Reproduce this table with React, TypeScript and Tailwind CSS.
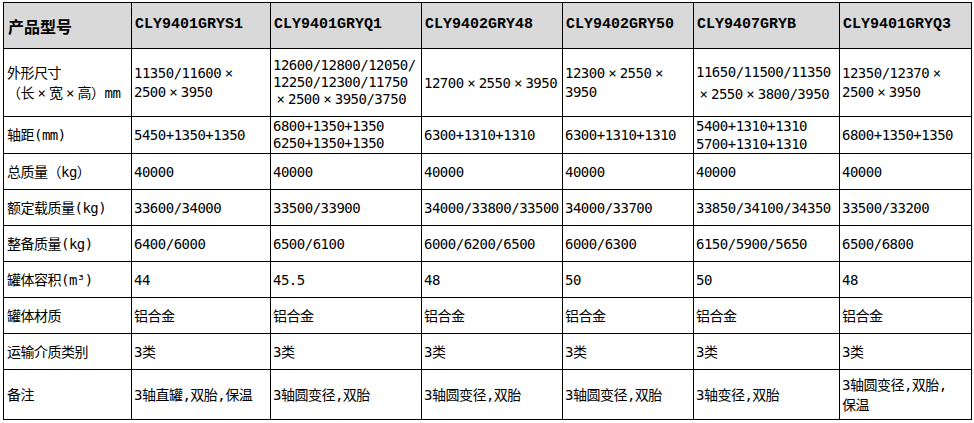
import React from 'react';

const X = () => <span className="inline-block w-[15px] text-center">×</span>;

type Cell = { lines: React.ReactNode[]; lead?: string };

const c = (...lines: React.ReactNode[]): Cell => ({ lines });
const cl = (lead: string, ...lines: React.ReactNode[]): Cell => ({ lines, lead });

const headers = ['CLY9401GRYS1', 'CLY9401GRYQ1', 'CLY9402GRY48', 'CLY9402GRY50', 'CLY9407GRYB', 'CLY9401GRYQ3'];

const rows: { label: Cell; cells: Cell[] }[] = [
  {
    label: cl('leading-[20px]', '外形尺寸', <>（长<X />宽<X />高）mm</>),
    cells: [
      cl('leading-[19px]', <>11350/11600<X /></>, <>2500<X />3950</>),
      cl('leading-[17px]', '12600/12800/12050/', '12250/12300/11750', <><X />2500<X />3950/3750</>),
      c(<>12700<X />2550<X />3950</>),
      cl('leading-[19px]', <>12300<X />2550<X /></>, '3950'),
      cl('leading-[22px]', '11650/11500/11350', <><X />2550<X />3800/3950</>),
      cl('leading-[19px]', <>12350/12370<X /></>, <>2500<X />3950</>),
    ],
  },
  {
    label: c('轴距(mm)'),
    cells: [
      c('5450+1350+1350'),
      cl('leading-[17px]', '6800+1350+1350', '6250+1350+1350'),
      c('6300+1310+1310'),
      c('6300+1310+1310'),
      cl('leading-[18px]', '5400+1310+1310', '5700+1310+1310'),
      c('6800+1350+1350'),
    ],
  },
  { label: c('总质量（kg）'), cells: [c('40000'), c('40000'), c('40000'), c('40000'), c('40000'), c('40000')] },
  {
    label: c('额定载质量(kg)'),
    cells: [c('33600/34000'), c('33500/33900'), c('34000/33800/33500'), c('34000/33700'), c('33850/34100/34350'), c('33500/33200')],
  },
  {
    label: c('整备质量(kg)'),
    cells: [c('6400/6000'), c('6500/6100'), c('6000/6200/6500'), c('6000/6300'), c('6150/5900/5650'), c('6500/6800')],
  },
  { label: c('罐体容积(m³)'), cells: [c('44'), c('45.5'), c('48'), c('50'), c('50'), c('48')] },
  { label: c('罐体材质'), cells: [c('铝合金'), c('铝合金'), c('铝合金'), c('铝合金'), c('铝合金'), c('铝合金')] },
  { label: c('运输介质类别'), cells: [c('3类'), c('3类'), c('3类'), c('3类'), c('3类'), c('3类')] },
  {
    label: c('备注'),
    cells: [
      c('3轴直罐,双胎,保温'),
      c('3轴圆变径,双胎'),
      c('3轴圆变径,双胎'),
      c('3轴圆变径,双胎'),
      c('3轴变径,双胎'),
      cl('leading-[20px]', '3轴圆变径,双胎,', '保温'),
    ],
  },
];

const body = "font-['DejaVu_Sans_Mono','Noto_Sans_CJK_SC',monospace] text-[14px] tracking-[-0.5px]";

const BodyCell: React.FC<{ cell: Cell; pad: string }> = ({ cell, pad }) => (
  <div className={`bg-white flex flex-col justify-center whitespace-nowrap text-black ${pad} ${body} ${cell.lead ?? 'leading-[18px]'}`}>
    {cell.lines.map((l, i) => (
      <div key={i}>{l}</div>
    ))}
  </div>
);

export default function App() {
  return (
    <div className="bg-white w-[974px] h-[423px] pl-[3px] pt-[2px]">
      <div className="grid w-fit grid-cols-[127px_138px_150px_140px_130px_145px_131px] grid-rows-[45px_67px_36px_35px_35px_35px_35px_35px_35px_49px] gap-px bg-black border border-black">
        <div className="bg-[#d9d9d9] flex items-center pl-[4px] font-['Noto_Sans_CJK_SC',sans-serif] font-bold text-[16px] text-black">
          产品型号
        </div>
        {headers.map((h) => (
          <div
            key={h}
            className="bg-[#d9d9d9] flex items-center pl-[3px] font-['Liberation_Mono',monospace] font-bold text-[15px] text-black"
          >
            {h}
          </div>
        ))}
        {rows.map((r, i) => (
          <React.Fragment key={i}>
            <BodyCell cell={r.label} pad="pl-[3px]" />
            {r.cells.map((cell, j) => (
              <BodyCell key={j} cell={cell} pad="pl-[2px]" />
            ))}
          </React.Fragment>
        ))}
      </div>
    </div>
  );
}
